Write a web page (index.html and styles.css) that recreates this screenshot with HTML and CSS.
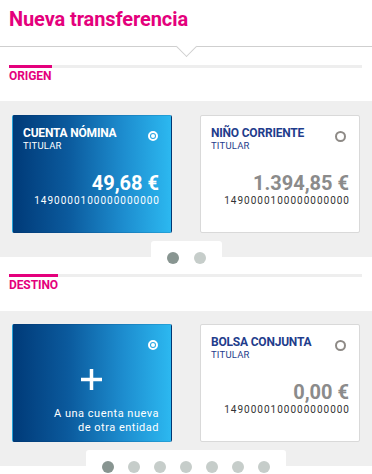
FILE: index.html
```html
<!DOCTYPE html>
<html lang="es">
<head>
<meta charset="utf-8">
<title>Nueva transferencia</title>
<link rel="stylesheet" href="styles.css">
</head>
<body>
<header class="page-head">
  <h1 class="page-title">Nueva transferencia</h1>
</header>
<div class="divider"></div>

<section class="block">
  <div class="sec-head">
    <div class="sec-bar"><span class="sec-bar-fill"></span></div>
    <h2 class="sec-label">ORIGEN</h2>
  </div>
  <div class="panel">
    <div class="cards">
      <div class="card card-blue">
        <span class="radio radio-on"></span>
        <div class="card-title">CUENTA NÓMINA</div>
        <div class="card-sub">TITULAR</div>
        <div class="card-amount">49,68 €</div>
        <div class="card-acc">1490000100000000000</div>
      </div>
      <div class="card card-white">
        <span class="radio radio-off"></span>
        <div class="card-title">NIÑO CORRIENTE</div>
        <div class="card-sub">TITULAR</div>
        <div class="card-amount">1.394,85 €</div>
        <div class="card-acc">1490000100000000000</div>
      </div>
    </div>
  </div>
  <div class="pager">
    <div class="pager-tab">
      <span class="dot dot-active"></span>
      <span class="dot"></span>
    </div>
  </div>
</section>

<section class="block block-2">
  <div class="sec-head">
    <div class="sec-bar"><span class="sec-bar-fill"></span></div>
    <h2 class="sec-label">DESTINO</h2>
  </div>
  <div class="panel panel-2">
    <div class="cards">
      <div class="card card-blue card-add">
        <span class="radio radio-on"></span>
        <svg class="plus" width="21" height="21" viewBox="0 0 21 21" aria-hidden="true">
          <rect x="8.75" y="0" width="3.5" height="21" fill="#fff"/>
          <rect x="0" y="8.75" width="21" height="3.5" fill="#fff"/>
        </svg>
        <div class="add-text">A una cuenta nueva<br>de otra entidad</div>
      </div>
      <div class="card card-white">
        <span class="radio radio-off"></span>
        <div class="card-title">BOLSA CONJUNTA</div>
        <div class="card-sub">TITULAR</div>
        <div class="card-amount">0,00 €</div>
        <div class="card-acc">1490000100000000000</div>
      </div>
    </div>
  </div>
  <div class="pager">
    <div class="pager-tab pager-tab-wide">
      <span class="dot dot-active"></span>
      <span class="dot"></span>
      <span class="dot"></span>
      <span class="dot"></span>
      <span class="dot"></span>
      <span class="dot"></span>
      <span class="dot"></span>
    </div>
  </div>
</section>
</body>
</html>
```

FILE: styles.css
```css
* { box-sizing: border-box; }

html, body {
  margin: 0;
  padding: 0;
  background: #fff;
}

body {
  width: 372px;
  height: 474px;
  overflow: hidden;
  font-family: Roboto, "Liberation Sans", Arial, sans-serif;
}

.page-head {
  padding: 7px 9px 0;
}

.page-title {
  margin: 0;
  font-size: 20px;
  line-height: 24px;
  font-weight: 700;
  color: #e4007c;
  letter-spacing: -0.1px;
}

.divider {
  position: relative;
  margin-top: 15px;
  height: 1px;
  background: #cfcfcf;
}

.divider::after {
  content: "";
  position: absolute;
  left: 186px;
  top: -7px;
  width: 14px;
  height: 14px;
  margin-left: -7px;
  background: #fff;
  border-right: 1px solid #cfcfcf;
  border-bottom: 1px solid #cfcfcf;
  transform: rotate(45deg);
}

.block {
  padding-top: 18px;
}

.block-2 {
  padding-top: 5px;
}

.sec-head {
  padding: 0 10px 0 9px;
}

.sec-bar {
  height: 3px;
  background: #eeeeee;
}

.sec-bar-fill {
  display: block;
  width: 43px;
  height: 3px;
  background: #e4007c;
}

.block-2 .sec-bar-fill {
  width: 49px;
}

.sec-label {
  margin: 1px 0 0;
  font-size: 12px;
  line-height: 14px;
  font-weight: 700;
  color: #e4007c;
  letter-spacing: -0.1px;
}

.panel {
  margin-top: 18px;
  background: #efefef;
  padding: 14px 12px 24px;
}

.panel-2 {
  margin-top: 19px;
  padding-top: 13px;
  padding-bottom: 24px;
}

.cards {
  display: flex;
  gap: 28px;
}

.card {
  position: relative;
  width: 160px;
  height: 118px;
  border: 1px solid transparent;
  border-radius: 2px;
  padding: 10px 10px 0;
  display: flex;
  flex-direction: column;
}

.card-blue {
  background: linear-gradient(to right, #003a78 0%, #0b5a9d 35%, #1d8dcf 70%, #2cb8f0 100%);
  border-color: rgba(0, 40, 90, 0.15);
  color: #fff;
  padding-right: 12px;
}

.card-white {
  background: #fff;
  border-color: #d9d9d9;
  color: #1f3d8c;
}

.radio {
  position: absolute;
  top: 15px;
  right: 13px;
  width: 10px;
  height: 10px;
  border-radius: 50%;
}

.radio-on {
  border: 2px solid #fff;
}

.radio-on::after {
  content: "";
  position: absolute;
  left: 1px;
  top: 1px;
  width: 4px;
  height: 4px;
  border-radius: 50%;
  background: #fff;
}

.radio-off {
  width: 11px;
  height: 11px;
  border: 2px solid #8e8a86;
}

.card-title {
  font-size: 12px;
  line-height: 14px;
  font-weight: 700;
  letter-spacing: -0.2px;
  white-space: nowrap;
}

.card-sub {
  font-size: 9.5px;
  line-height: 11px;
  letter-spacing: 0.2px;
}

.card-amount {
  margin-top: 21px;
  text-align: right;
  font-size: 20px;
  line-height: 23px;
  font-weight: 700;
}

.card-white .card-amount {
  color: #8b8b8b;
}

.card-acc {
  text-align: right;
  font-size: 10px;
  line-height: 12px;
  letter-spacing: 1px;
  margin-right: -1px;
}

.card-white .card-acc {
  color: #333;
}

.card-add {
  align-items: center;
  padding-bottom: 6px;
}

.plus {
  display: block;
  margin-top: 34px;
}

.add-text {
  margin-top: auto;
  align-self: stretch;
  text-align: right;
  font-size: 11px;
  line-height: 14px;
  letter-spacing: 0.5px;
}

.pager {
  display: flex;
  justify-content: center;
  margin-top: -16px;
}

.pager-tab {
  display: flex;
  gap: 15px;
  background: #fff;
  border-radius: 3px 3px 0 0;
  padding: 11px 16px 5px;
}

.pager-tab-wide {
  gap: 14px;
}

.dot {
  display: block;
  width: 12px;
  height: 12px;
  border-radius: 50%;
  background: #c6cdca;
}

.dot-active {
  background: #889591;
}
```
